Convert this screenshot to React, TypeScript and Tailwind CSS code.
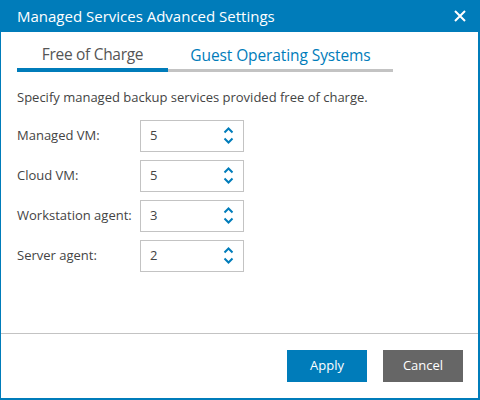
import { useState } from 'react';

const rows = [
  { label: 'Managed VM:', value: 5 },
  { label: 'Cloud VM:', value: 5 },
  { label: 'Workstation agent:', value: 3 },
  { label: 'Server agent:', value: 2 },
];

function Spinner({ value }: { value: number }) {
  return (
    <div className="flex h-[32px] w-[104px] items-center border border-[#c3c3c3] bg-white pl-[9px] pr-[9px]">
      <span className="flex-1 text-[13px] text-[#444]">{value}</span>
      <div className="flex flex-col items-center gap-[3px]">
        <svg width="11" height="7" viewBox="0 0 11 7">
          <path d="M1.5 5.5 L5.5 1.5 L9.5 5.5" fill="none" stroke="#007cba" strokeWidth="2" />
        </svg>
        <svg width="11" height="7" viewBox="0 0 11 7">
          <path d="M1.5 1.5 L5.5 5.5 L9.5 1.5" fill="none" stroke="#007cba" strokeWidth="2" />
        </svg>
      </div>
    </div>
  );
}

export default function App() {
  const [tab, setTab] = useState(0);

  return (
    <div
      className="flex h-[400px] w-[480px] flex-col border-b-2 border-l border-r-2 border-[#007cba] bg-white text-[#444]"
      style={{ fontFamily: '"Open Sans", "Noto Sans", sans-serif' }}
    >
      {/* Header */}
      <div className="flex h-[32px] shrink-0 items-center justify-between bg-[#007cba] pl-[16px] pr-[12px]">
        <span className="text-[15px] text-white">Managed Services Advanced Settings</span>
        <svg width="12" height="12" viewBox="0 0 12 12">
          <path d="M1 1 L11 11 M11 1 L1 11" stroke="white" strokeWidth="2" />
        </svg>
      </div>

      {/* Tabs */}
      <div className="mt-[8px] flex w-[392px] pl-[16px]">
        <button
          onClick={() => setTab(0)}
          className={`h-[32px] w-[151px] pt-[2px] text-[15.5px] tracking-[-0.3px] ${
            tab === 0 ? 'border-b-4 border-[#007cba] text-[#555]' : 'border-b-[3px] border-[#c3c3c3] text-[#007cba]'
          }`}
        >
          Free of Charge
        </button>
        <button
          onClick={() => setTab(1)}
          className={`h-[32px] flex-1 pt-[2px] text-[15.5px] tracking-[-0.1px] ${
            tab === 1 ? 'border-b-4 border-[#007cba] text-[#555]' : 'border-b-[3px] border-[#c3c3c3] text-[#007cba]'
          }`}
        >
          Guest Operating Systems
        </button>
      </div>

      {/* Content */}
      <div className="flex-1 pl-[16px] pt-[16px]">
        <p className="text-[13px]">Specify managed backup services provided free of charge.</p>
        <div className="mt-[12px] flex flex-col gap-[8px]">
          {rows.map((r) => (
            <div key={r.label} className="flex items-center">
              <span className="w-[123px] text-[13px]">{r.label}</span>
              <Spinner value={r.value} />
            </div>
          ))}
        </div>
      </div>

      {/* Footer */}
      <div className="flex h-[65px] shrink-0 items-start justify-end gap-[16px] border-t border-[#c3c3c3] pr-[15px] pt-[16px]">
        <button className="h-[32px] w-[80px] bg-[#007cba] text-[13px] text-white">Apply</button>
        <button className="h-[32px] w-[80px] bg-[#666666] text-[13px] text-white">Cancel</button>
      </div>
    </div>
  );
}
